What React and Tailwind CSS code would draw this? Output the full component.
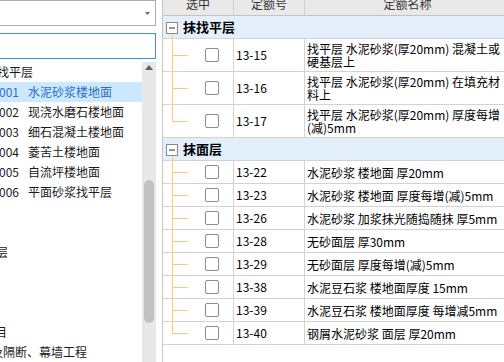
import React from 'react';

const treeItems = [
  { text: '找平层', shift: '-ml-[3px]' },
  { code: '001', text: '水泥砂浆楼地面', selected: true },
  { code: '002', text: '现浇水磨石楼地面' },
  { code: '003', text: '细石混凝土楼地面' },
  { code: '004', text: '菱苦土楼地面' },
  { code: '005', text: '自流坪楼地面' },
  { code: '006', text: '平面砂浆找平层' },
  {},
  {},
  { text: '层', shift: '-ml-[4px]' },
  {},
  {},
  {},
  { text: '目', shift: '-ml-[5px]' },
  { text: '及隔断、幕墙工程', shift: '-ml-[9px]' },
];

const groups = [
  {
    title: '抹找平层',
    rows: [
      { code: '13-15', lines: ['找平层 水泥砂浆(厚20mm) 混凝土或', '硬基层上'] },
      { code: '13-16', lines: ['找平层 水泥砂浆(厚20mm) 在填充材', '料上'] },
      { code: '13-17', lines: ['找平层 水泥砂浆(厚20mm) 厚度每增', '(减)5mm'] },
    ],
  },
  {
    title: '抹面层',
    rows: [
      { code: '13-22', lines: ['水泥砂浆 楼地面 厚20mm'] },
      { code: '13-23', lines: ['水泥砂浆 楼地面 厚度每增(减)5mm'] },
      { code: '13-26', lines: ['水泥砂浆 加浆抹光随捣随抹 厚5mm'] },
      { code: '13-28', lines: ['无砂面层 厚30mm'] },
      { code: '13-29', lines: ['无砂面层 厚度每增(减)5mm'] },
      { code: '13-38', lines: ['水泥豆石浆 楼地面厚度 15mm'] },
      { code: '13-39', lines: ['水泥豆石浆 楼地面厚度 每增减5mm'] },
      { code: '13-40', lines: ['钢屑水泥砂浆 面层 厚20mm'] },
    ],
  },
];

const LINE = '#fcc877';

function Branch({ h, last }) {
  const mid = Math.floor(h / 2) + 0.5;
  return (
    <svg width="26" height={h} className="shrink-0">
      <line x1="9.5" y1="0" x2="9.5" y2={last ? mid : h} stroke={LINE} strokeWidth="1" />
      <line x1="9.5" y1={mid} x2="25" y2={mid} stroke={LINE} strokeWidth="1" />
    </svg>
  );
}

function GroupRow({ title }) {
  return (
    <div className="flex h-[23px] items-start border-b border-[#d3d3d3] bg-[#e3f0fc]">
      <svg width="20" height="22" className="shrink-0">
        <rect x="3.5" y="6.5" width="11" height="11" fill="#ffffff" stroke="#8a8a8a" />
        <line x1="6" y1="12" x2="12" y2="12" stroke="#333333" strokeWidth="1" />
        <line x1="9.5" y1="18" x2="9.5" y2="22" stroke={LINE} strokeWidth="1" />
      </svg>
      <span className="text-[13px] font-bold leading-[22px] text-black">{title}</span>
    </div>
  );
}

function DataRow({ row, last }) {
  const tall = row.lines.length > 1;
  const h = tall ? 32 : 22;
  return (
    <div className={`flex border-b border-[#d3d3d3] ${tall ? 'h-[33px]' : 'h-[23px]'}`}>
      <div className="flex w-[71px] shrink-0 items-center border-r border-[#d3d3d3]">
        <Branch h={h} last={last} />
        <div className="ml-[16px] h-[14px] w-[14px] rounded-[2px] border border-[#8c8c8c] bg-white" />
      </div>
      <div className="flex w-[71px] shrink-0 items-center border-r border-[#d3d3d3] pl-[2px] text-[12px] text-black">
        {row.code}
      </div>
      <div className="flex flex-1 flex-col justify-center pl-[2px] text-[12px] leading-[13px] text-black">
        {row.lines.map((l) => (
          <span key={l} className="whitespace-nowrap">{l}</span>
        ))}
      </div>
    </div>
  );
}

export default function App() {
  return (
    <div className="flex h-[362px] w-[504px] overflow-hidden bg-white font-[family-name:'Noto_Sans_CJK_SC',sans-serif]">
      {/* left: selector, search and tree */}
      <div className="flex w-[156px] shrink-0 flex-col">
        <div className="-ml-[2px] flex h-[26px] items-center justify-end border border-[#acacac] bg-white pr-[5px]">
          <svg width="5" height="3">
            <polygon points="0,0 5,0 2.5,3" fill="#6b6b6b" />
          </svg>
        </div>
        <div className="-ml-[2px] mt-[7px] h-[26px] border border-[#3d8fe2] bg-white" />
        <div className="mt-[3px] flex min-h-0 flex-1">
          <div className="flex w-[142px] shrink-0 flex-col overflow-hidden text-[12px] leading-[20px]">
            {treeItems.map((it, i) => (
              <div
                key={i}
                className={`flex h-[20px] shrink-0 whitespace-nowrap ${
                  it.selected ? 'bg-[#cce8ff] text-[#2b6fc4]' : 'text-[#1a1a1a]'
                }`}
              >
                {it.code ? (
                  <>
                    <span className="-ml-[1px] w-[29px] shrink-0">{it.code}</span>
                    <span>{it.text}</span>
                  </>
                ) : (
                  <span className={it.shift}>{it.text}</span>
                )}
              </div>
            ))}
          </div>
          <div className="flex w-[14px] shrink-0 flex-col items-center bg-[#e8e8e8]">
            <svg width="8" height="5" className="mt-[3px]">
              <polygon points="4,0 8,5 0,5" fill="#606060" />
            </svg>
            <div className="mt-[110px] h-[143px] w-[10px] rounded-full bg-[#c2c2c2]" />
          </div>
        </div>
      </div>

      <div className="w-[6px] shrink-0" />

      {/* right: quota table */}
      <div className="flex w-[348px] shrink-0 flex-col border-l border-[#c6c6c6]">
        <div className="flex h-[16px] shrink-0 overflow-hidden border-b border-[#c3c3c3] bg-[#e9e9e9] text-[12px] leading-[20px] text-[#333]">
          <div className="w-[71px] shrink-0 border-r border-[#cfcfcf] text-center">
            <div className="-mt-[6px]">选中</div>
          </div>
          <div className="w-[71px] shrink-0 border-r border-[#cfcfcf] text-center">
            <div className="-mt-[6px]">定额号</div>
          </div>
          <div className="flex-1 text-center">
            <div className="-mt-[6px]">定额名称</div>
          </div>
        </div>
        {groups.map((g) => (
          <div key={g.title} className="flex flex-col">
            <GroupRow title={g.title} />
            {g.rows.map((r, i) => (
              <DataRow key={r.code} row={r} last={i === g.rows.length - 1} />
            ))}
          </div>
        ))}
      </div>
    </div>
  );
}
